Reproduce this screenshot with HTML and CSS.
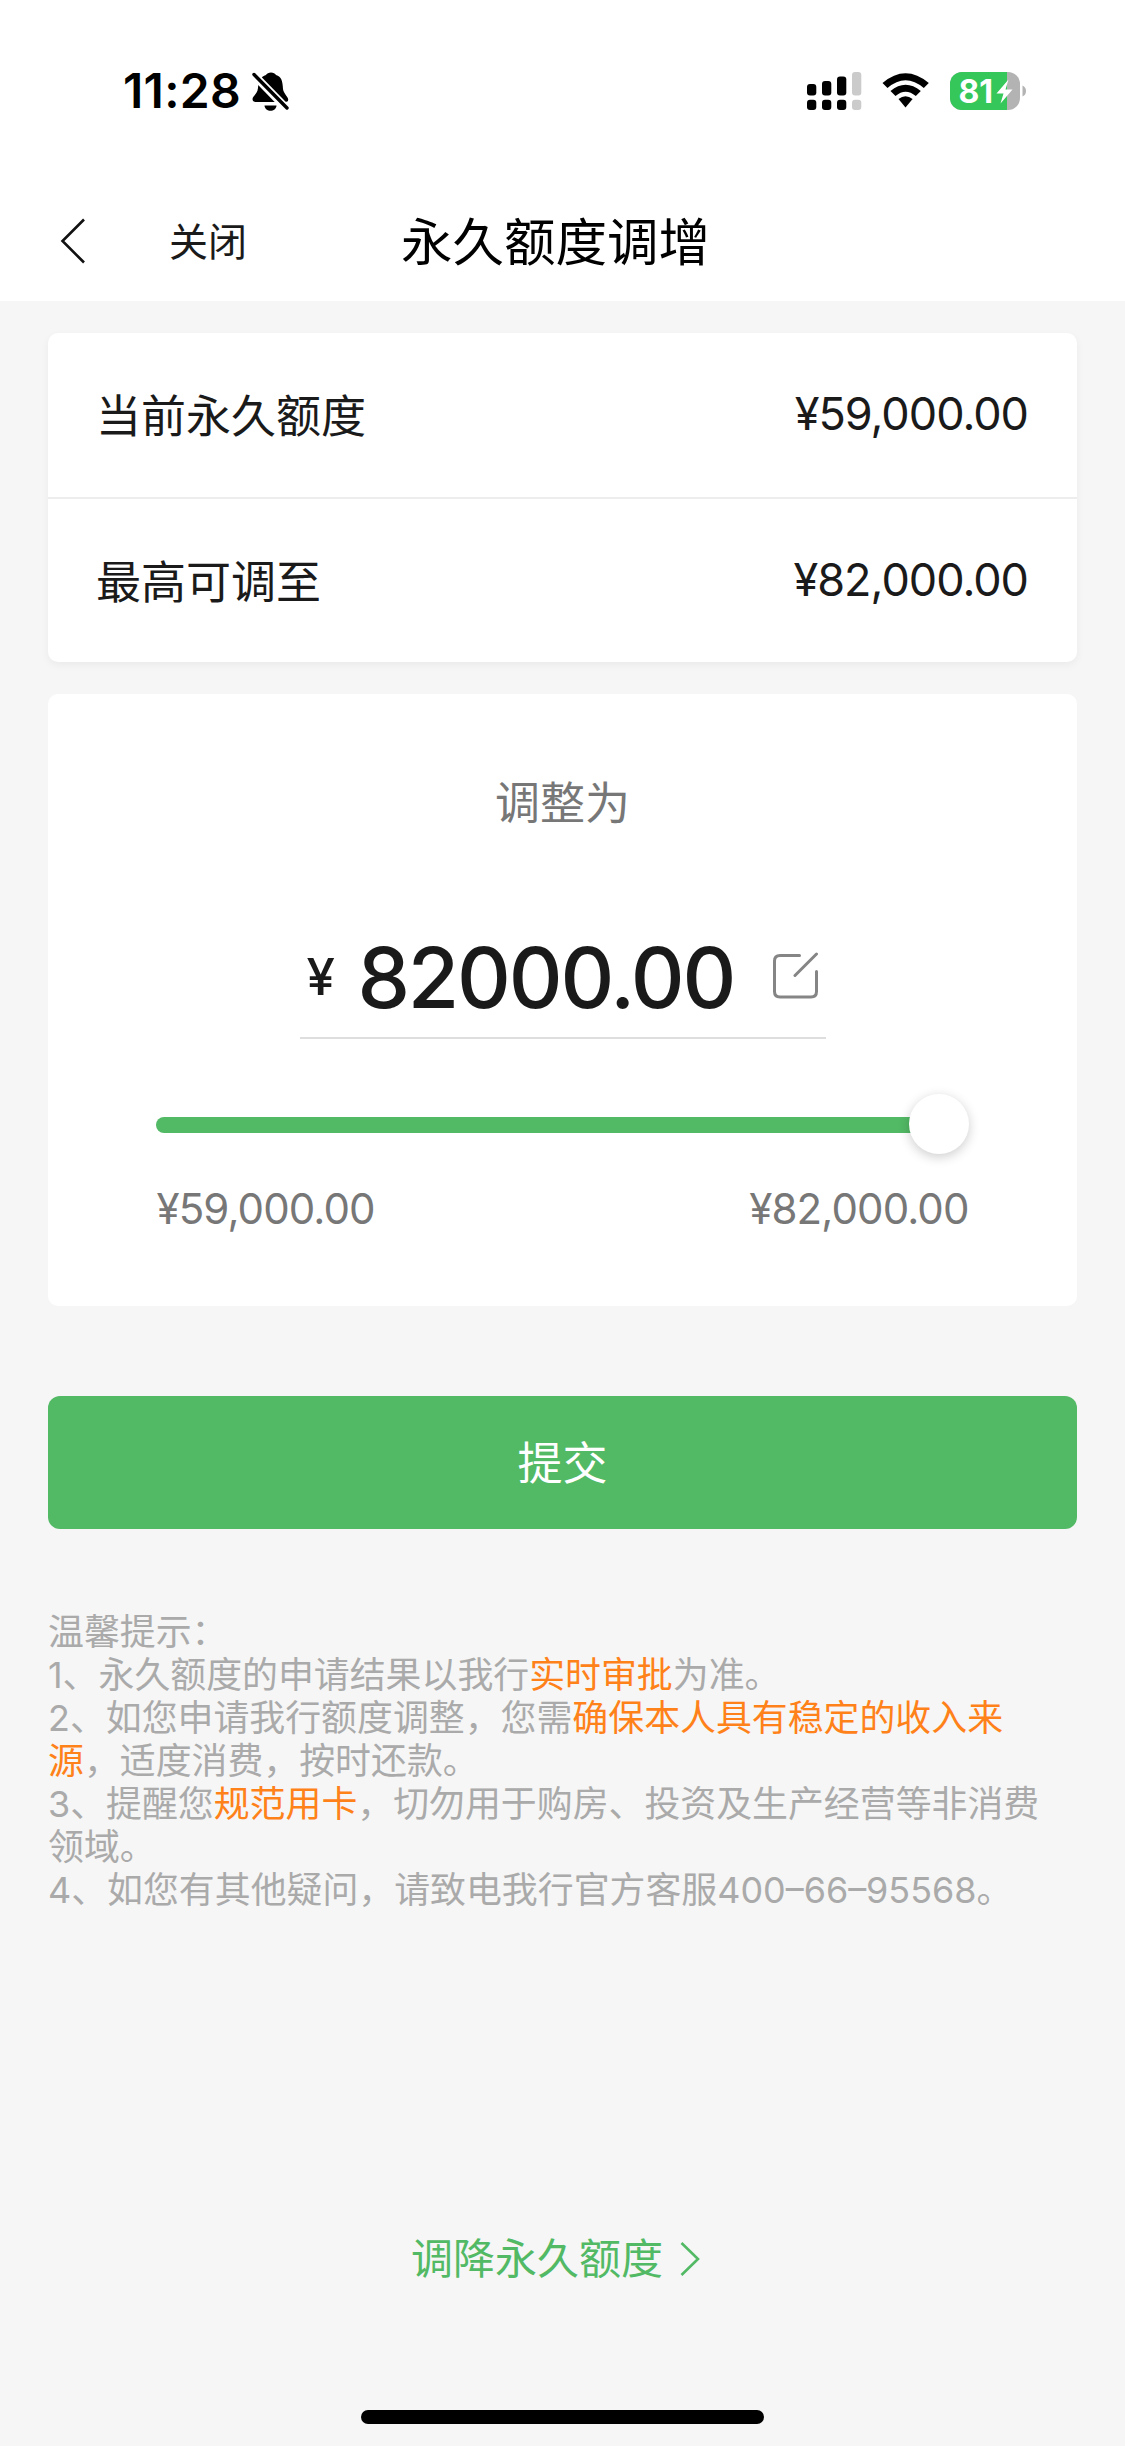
FILE: index.html
```html
<!DOCTYPE html>
<html lang="zh-CN">
<head>
<meta charset="utf-8">
<title>永久额度调增</title>
<link rel="stylesheet" href="styles.css">
</head>
<body>
<header class="top">
  <div class="status">
    <div class="status-left">
      <span class="time">11:28</span>
      <svg class="bell" width="40" height="42" viewBox="0 0 40 42">
        <path d="M6 31H34Q38 31 37 27.5C36 25 32.500 22 32 18C31.500 10 30.500 5.500 25 4C23.500 .5 16.500 .5 15 4C9.500 5.500 7.500 11 7 17C6.500 23 2 24.500 1.500 28Q1.500 31 5 31Z"/>
        <path d="M13.500 34.500H25.500C25 41.500 14 41.500 13.500 34.500Z"/>
        <path d="M0 1L38 40" stroke="#fff" stroke-width="8"/>
        <path d="M3 3.500L36 37" stroke="#000" stroke-width="3.400" stroke-linecap="round"/>
      </svg>
    </div>
    <div class="status-right">
      <svg class="signal" width="55" height="38" viewBox="0 0 55 38">
        <rect x="0" y="12" width="9.300" height="11.500" rx="3"/>
        <rect x="15" y="9" width="9.300" height="14.500" rx="3"/>
        <rect x="30" y="4.500" width="9.300" height="19" rx="3"/>
        <rect x="45" y="0" width="9.300" height="23.500" rx="3" fill="#cbcbcb"/>
        <rect x="0" y="27.700" width="9.300" height="10.300" rx="3"/>
        <rect x="15" y="27.700" width="9.300" height="10.300" rx="3"/>
        <rect x="30" y="27.700" width="9.300" height="10.300" rx="3"/>
        <rect x="45" y="27.700" width="9.300" height="10.300" rx="3" fill="#cbcbcb"/>
      </svg>
      <svg class="wifi" width="48" height="35" viewBox="0 0 48 35">
        <path d="M0.500 10Q23.500 -9.500 46.800 10L41.800 15Q23.500 -0.500 5.500 15Z"/>
        <path d="M8.500 18Q23.500 5.500 38.800 18L33.800 23Q23.500 14.500 13.500 23Z"/>
        <path d="M16.500 26Q23.500 20.500 30.600 26L23.500 34.500Z"/>
      </svg>
      <svg class="battery" width="76" height="38" viewBox="0 0 76 38">
        <defs><clipPath id="cell"><rect width="70" height="38" rx="12"/></clipPath></defs>
        <g clip-path="url(#cell)">
          <rect width="70" height="38" fill="#b3b3b3"/>
          <rect width="57" height="38" fill="#35c759"/>
        </g>
        <path d="M72.500 13.500Q76 15 76 19T72.500 24.500Z" fill="#b3b3b3"/>
        <text class="percent" x="8.500" y="31">81</text>
        <path d="M58.500 7.500L46.500 21.500H53.500L50.500 31.500L62.500 17.500H55.500Z" fill="#fff"/>
      </svg>
    </div>
  </div>
  <nav class="nav">
    <svg class="back" width="26" height="46" viewBox="0 0 26 46"><path d="M24 1.500L2.500 23L24 44.500" fill="none" stroke="#111" stroke-width="2.600"/></svg>
    <a class="close">关闭</a>
    <h1 class="title">永久额度调增</h1>
  </nav>
</header>
<main class="content">
  <section class="card limits">
    <div class="row"><span class="label">当前永久额度</span><span class="value">¥59,000.00</span></div>
    <div class="row"><span class="label">最高可调至</span><span class="value">¥82,000.00</span></div>
  </section>
  <section class="card adjust">
    <h2 class="adjust-title">调整为</h2>
    <div class="amount">
      <span class="currency">¥</span>
      <span class="number">82000.00</span>
      <svg class="edit" width="47" height="48" viewBox="0 0 47 48" fill="none" stroke="#858585" stroke-width="3" stroke-linecap="round" stroke-linejoin="round">
        <path d="M27.500 3.500H8Q2.500 3.500 2.500 9V39.500Q2.500 45 8 45H39Q44.500 45 44.500 39.500V19.500"/>
        <path d="M44.500 2L23 23.500"/>
      </svg>
    </div>
    <div class="slider"><div class="track"></div><div class="knob"></div></div>
    <div class="range"><span>¥59,000.00</span><span>¥82,000.00</span></div>
  </section>
  <button class="submit">提交</button>
  <section class="tips">
    <p>温馨提示：</p>
    <p>1、永久额度的申请结果以我行<em>实时审批</em>为准。</p>
    <p>2、如您申请我行额度调整，您需<em>确保本人具有稳定的收入来源</em>，适度消费，按时还款。</p>
    <p>3、提醒您<em>规范用卡</em>，切勿用于购房、投资及生产经营等非消费领域。</p>
    <p>4、如您有其他疑问，请致电我行官方客服400–66–95568。</p>
  </section>
</main>
<footer class="foot">
  <a class="reduce">调降永久额度
    <svg width="20" height="36" viewBox="0 0 20 36"><path d="M1.500 2L18 18L1.500 34" fill="none" stroke="#52b965" stroke-width="2.600"/></svg>
  </a>
  <div class="home-bar"></div>
</footer>
</body>
</html>
```
FILE: styles.css
```css
* { box-sizing: border-box; margin: 0; padding: 0; }
body {
  width: 1125px;
  height: 2446px;
  display: flex;
  flex-direction: column;
  background: #f6f6f6;
  color: #1a1a1a;
  font-family: Inter, "Noto Sans CJK SC", sans-serif;
  overflow: hidden;
}
svg { display: block; flex: none; }
.top { height: 301px; background: #fff; color: #000; }
.status {
  height: 181px;
  padding: 70px 99px 0 123px;
  display: flex;
  justify-content: space-between;
}
.status-left, .status-right { display: flex; align-items: flex-start; }
.time {
  width: 128px;
  line-height: 42px;
  font-size: 48px;
  font-weight: 600;
  letter-spacing: .3px;
  white-space: nowrap;
}
.bell { margin-top: 1px; }
.signal { margin-top: 2px; }
.wifi { margin: 3px 0 0 20px; }
.battery { margin: 2px 0 0 20px; }
.percent { font-size: 32px; font-weight: 700; fill: #fff; }
.nav { height: 120px; padding-left: 60px; display: flex; align-items: center; }
.close { margin-left: 83px; width: 232px; padding-bottom: 4px; font-size: 39px; color: #1a1a1a; }
.title { padding-bottom: 6px; font-size: 51.500px; font-weight: 400; }
.content { padding: 32px 48px 0; display: flex; flex-direction: column; }
.card { background: #fff; border-radius: 10px; box-shadow: 0 3px 9px rgba(0, 0, 0, .05); }
.row {
  height: 164px;
  padding: 0 48px;
  display: flex;
  align-items: center;
  justify-content: space-between;
  font-size: 45px;
}
.row + .row { height: 165px; border-top: 2px solid #ededed; }
.label { padding-bottom: 3px; }
.value { margin-right: 1px; padding-bottom: 3px; letter-spacing: -1px; }
.adjust {
  margin-top: 32px;
  height: 612px;
  padding-top: 83px;
  display: flex;
  flex-direction: column;
  align-items: center;
  box-shadow: none;
}
.adjust-title { font-size: 45px; line-height: 54px; font-weight: 400; color: #777; }
.amount {
  width: 526px;
  height: 208px;
  padding: 88px 7px 0 7px;
  display: flex;
  align-items: center;
  border-bottom: 2px solid #dedede;
  font-weight: 500;
}
.currency { width: 51px; padding-bottom: 4px; font-size: 51px; }
.number { width: 414px; font-size: 83.500px; line-height: 100px; letter-spacing: -2.200px; }
.edit { margin-bottom: 4px; }
.slider { position: relative; width: 812px; height: 60px; margin-top: 55px; padding-top: 23px; }
.track { width: 781px; height: 16px; margin-left: -1px; border-radius: 8px; background: #52b965; }
.knob {
  position: absolute;
  top: 0;
  right: 0;
  width: 60px;
  height: 60px;
  border-radius: 50%;
  background: #fff;
  box-shadow: 0 3px 12px rgba(0, 0, 0, .2);
}
.range {
  width: 812px;
  margin-top: 29px;
  display: flex;
  justify-content: space-between;
  font-size: 42px;
  line-height: 52px;
  letter-spacing: -.9px;
  color: #777;
}
.submit {
  margin-top: 90px;
  height: 133px;
  padding-top: 2px;
  border: 0;
  border-radius: 12px;
  background: #52b965;
  color: #fff;
  font: 400 45px/54px Inter, "Noto Sans CJK SC", sans-serif;
}
.tips { margin-top: 82px; padding-right: 24px; font-size: 35.900px; line-height: 43px; color: #aaa; }
.tips em { font-style: normal; color: #ff8119; }
.foot {
  margin-top: auto;
  height: 212px;
  display: flex;
  flex-direction: column;
  justify-content: space-between;
  align-items: center;
  padding-bottom: 22px;
}
.reduce { display: flex; align-items: center; gap: 17px; margin-right: 14px; font-size: 42px; line-height: 50px; color: #52b965; }
.home-bar { width: 403px; height: 14px; border-radius: 7px; background: #000; }
```
